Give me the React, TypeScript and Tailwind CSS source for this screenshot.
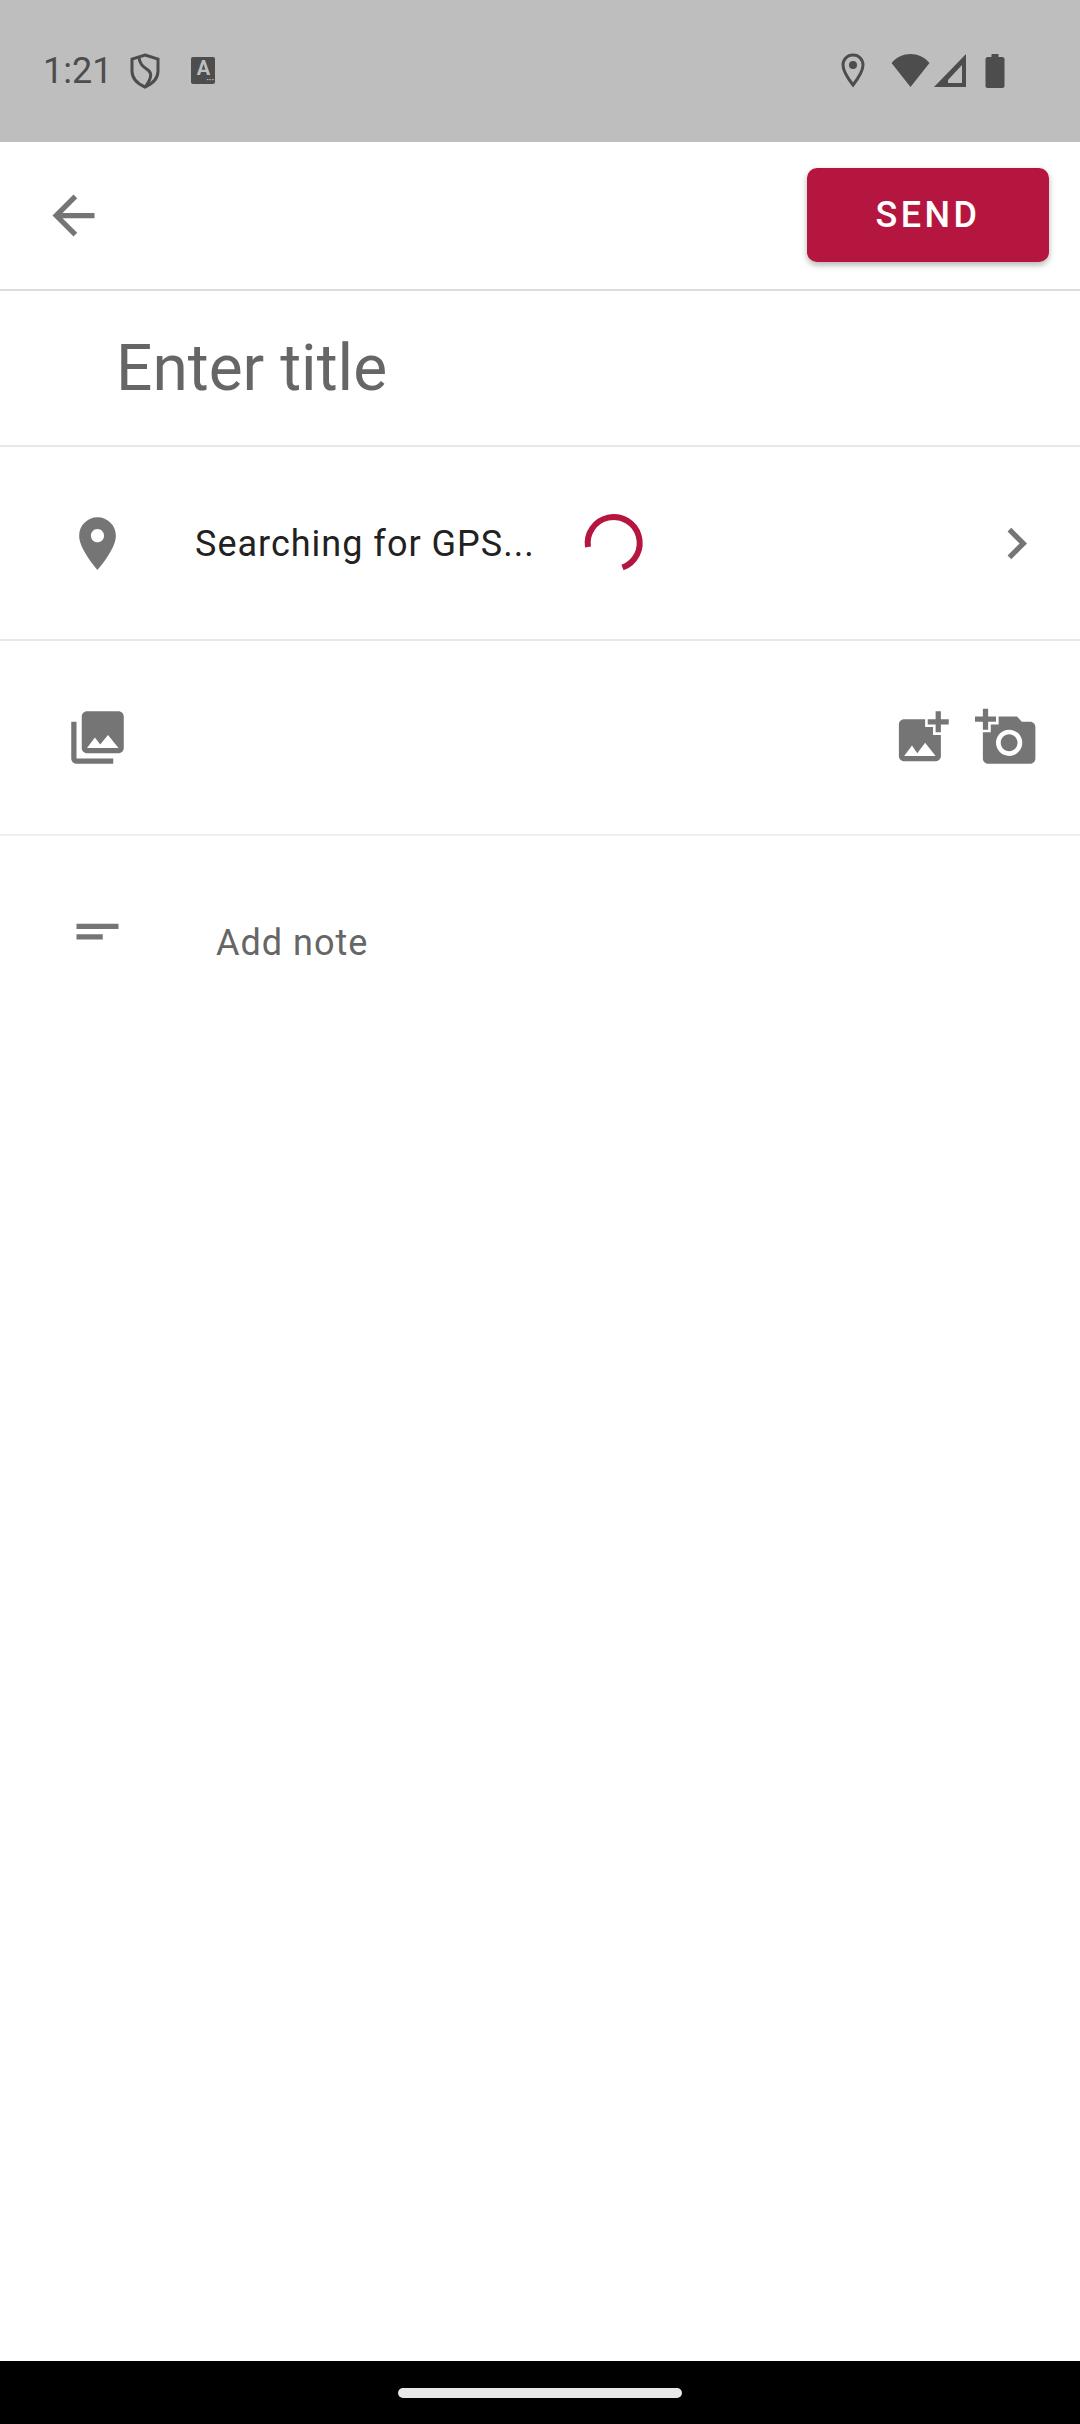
const ICON_GRAY = '#757575'

function Icon({ d, size = 63, className = '' }: { d: string; size?: number; className?: string }) {
  return (
    <svg width={size} height={size} viewBox="0 0 24 24" fill={ICON_GRAY} className={`shrink-0 ${className}`}>
      <path d={d} />
    </svg>
  )
}

function StatusBar() {
  return (
    <div className="flex h-[142px] items-center bg-[#bebebe] pb-[1px] pl-[43px] text-[#4d4d4d]">
      <span className="text-[36px] leading-[42px]">1:21</span>
      {/* vpn shield */}
      <svg width="30" height="36" viewBox="0 0 30 36" fill="none" stroke="#4d4d4d" strokeWidth="3" className="ml-[18px]">
        <path d="M15 2 L28 6 V18 C28 26 22 31 15 34 C8 31 2 26 2 18 V6 Z" />
        <path d="M9 5 C10 12 14 14 18 17 C22 20 21 26 16 33" />
      </svg>
      {/* keyboard badge */}
      <div className="relative ml-[31px] flex h-[27px] w-[24px] justify-center rounded-[2px] bg-[#4d4d4d]">
        <span className="text-[20px] leading-[23px] font-bold text-[#bebebe]">A</span>
        <span className="absolute right-[1px] bottom-[2px] text-[6px] leading-[4px] font-bold tracking-[0.5px] text-[#bebebe]">
          •••
        </span>
      </div>
      <div className="ml-auto flex items-center pr-[75px]">
        <svg width="24" height="35" viewBox="0 0 24 35" fill="none">
          <path d="M12 2 C6 2 2 6.5 2 12 C2 19 12 32 12 32 C12 32 22 19 22 12 C22 6.5 18 2 12 2 Z" stroke="#4d4d4d" strokeWidth="3" />
          <circle cx="12" cy="12" r="4" fill="#4d4d4d" />
        </svg>
        <svg width="39" height="34" viewBox="0 0 38 34" fill="#4d4d4d" className="ml-[26px]">
          <path d="M0 9 C5 3 12 0 19 0 C26 0 33 3 38 9 L19 33 Z" />
        </svg>
        <svg width="32" height="33" viewBox="0 0 32 33" className="ml-[4px]">
          <path fillRule="evenodd" fill="#4d4d4d" d="M32 0 V33 H0 Z M28 11 L14 26 V29 H28 Z" />
        </svg>
        <svg width="20" height="34" viewBox="0 0 19 34" fill="#4d4d4d" className="ml-[19px]">
          <path d="M6 0 H13 V3 H17 C18 3 19 4 19 5 V32 C19 33 18 34 17 34 H2 C1 34 0 33 0 32 V5 C0 4 1 3 2 3 H6 Z" />
        </svg>
      </div>
    </div>
  )
}

export default function App() {
  return (
    <div
      className="flex h-[2424px] w-[1080px] flex-col overflow-hidden bg-white"
      style={{ fontFamily: 'Roboto, sans-serif' }}
    >
      <StatusBar />

      {/* Header */}
      <div className="flex h-[149px] items-center justify-between border-b-2 border-[#dcdcdc] pr-[31px] pl-[42px]">
        <Icon d="M20 11H7.83l5.59-5.59L12 4l-8 8 8 8 1.41-1.41L7.83 13H20v-2z" />
        <button className="mb-[1px] flex h-[94px] w-[242px] items-center justify-center rounded-[10px] bg-[#b5163f] text-[36px] font-medium tracking-[3.5px] text-white shadow-[0_3px_6px_rgba(0,0,0,0.3)]">
          SEND
        </button>
      </div>

      {/* Title */}
      <div className="flex h-[156px] items-center border-b-2 border-[#e8e8e8] pl-[116px]">
        <span className="text-[64px] leading-[75px] text-[#666666]">Enter title</span>
      </div>

      {/* GPS row */}
      <div className="flex h-[194px] items-center border-b-2 border-[#e8e8e8] pr-[32px] pl-[66px]">
        <Icon d="M12 2C8.13 2 5 5.13 5 9c0 5.25 7 13 7 13s7-7.75 7-13c0-3.87-3.13-7-7-7zm0 9.5c-1.38 0-2.5-1.12-2.5-2.5s1.12-2.5 2.5-2.5 2.5 1.12 2.5 2.5-1.12 2.5-2.5 2.5z" />
        <span className="mt-[2px] ml-[66px] text-[36px] leading-[42px] tracking-[1px] text-[#212121]">Searching for GPS...</span>
        <svg width="64" height="64" viewBox="0 0 64 64" fill="none" className="ml-[47px]">
          <path d="M40.5 56.5 A26 26 0 1 0 6 36" stroke="#b5163f" strokeWidth="6" />
        </svg>
        <Icon className="ml-auto" d="M10 6L8.59 7.41 13.17 12l-4.58 4.59L10 18l6-6z" />
      </div>

      {/* Photos row */}
      <div className="flex h-[195px] items-center border-b-2 border-[#eeeeee] pr-[42px] pl-[66px]">
        <Icon d="M22 16V4c0-1.1-.9-2-2-2H8c-1.1 0-2 .9-2 2v12c0 1.1.9 2 2 2h12c1.1 0 2-.9 2-2zm-11-4l2.03 2.71L16 11l4 5H8l3-4zM2 6v14c0 1.1.9 2 2 2h14v-2H4V6H2z" />
        <Icon
          className="ml-auto"
          d="M19 7v2.99s-1.99.01-2 0V7h-3s.01-1.99 0-2h3V2h2v3h3v2h-3zm-3 4V8h-3V5H5c-1.1 0-2 .9-2 2v12c0 1.1.9 2 2 2h12c1.1 0 2-.9 2-2v-8h-3zM5 19l3-4 2 3 3-4 4 5H5z"
        />
        <Icon
          className="ml-[21px]"
          d="M3 4V1h2v3h3v2H5v3H3V6H0V4h3zm3 6V7h3V4h7l1.83 2H21c1.1 0 2 .9 2 2v12c0 1.1-.9 2-2 2H5c-1.1 0-2-.9-2-2V10h3zm7 9c2.76 0 5-2.24 5-5s-2.24-5-5-5-5 2.24-5 5 2.24 5 5 5zm-3.2-5c0 1.77 1.43 3.2 3.2 3.2s3.2-1.43 3.2-3.2-1.43-3.2-3.2-3.2-3.2 1.43-3.2 3.2z"
        />
      </div>

      {/* Note */}
      <div className="flex flex-1 items-start pt-[64px] pl-[66px]">
        <Icon d="M4 9h16v2H4zm0 4h10v2H4z" />
        <span className="mt-[22px] ml-[87px] text-[36px] leading-[42px] tracking-[1px] text-[#666666]">Add note</span>
      </div>

      {/* Nav bar */}
      <div className="flex h-[63px] justify-center bg-black pt-[27px]">
        <div className="h-[10px] w-[284px] rounded-full bg-[#e8e8e8]" />
      </div>
    </div>
  )
}
